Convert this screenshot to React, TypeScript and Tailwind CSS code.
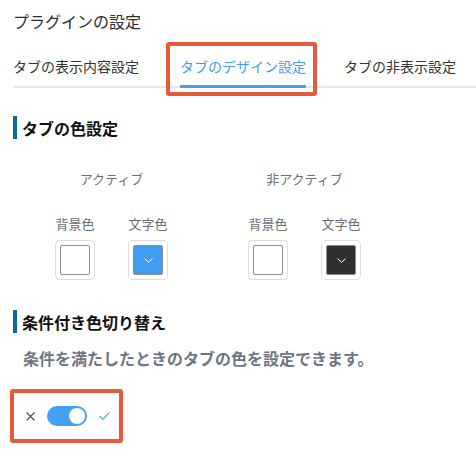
// プラグイン設定画面:タブのデザイン設定
import React, { useState } from "react";

const FONT = "'Noto Sans CJK JP', 'Noto Sans', sans-serif";

function Swatch({ color, chevron }: { color?: string; chevron?: boolean }) {
  return (
    <div className="w-[40px] h-[40px] border border-[#dcdce0] rounded-[5px] p-[4px] bg-white">
      <div
        className={`w-[30px] h-[30px] border border-[#8e8e93] rounded-[2px] flex items-center justify-center ${color ?? "bg-white"}`}
      >
        {chevron && (
          <svg width="9" height="5" viewBox="0 0 9 5" fill="none">
            <path d="M0.5 0.5 L4.5 4.3 L8.5 0.5" stroke="#ffffff" strokeWidth="1" />
          </svg>
        )}
      </div>
    </div>
  );
}

function ColorGroup({ title, textColor }: { title: string; textColor: string }) {
  return (
    <div className="flex flex-col items-center">
      <div className="text-[13px] leading-[20px] text-[#6f6f73]">{title}</div>
      <div className="flex gap-[33px] mt-[26px]">
        <div className="flex flex-col items-center">
          <div className="text-[13px] leading-[18px] text-[#6f6f73]">背景色</div>
          <div className="mt-[7px]">
            <Swatch />
          </div>
        </div>
        <div className="flex flex-col items-center">
          <div className="text-[13px] leading-[18px] text-[#6f6f73]">文字色</div>
          <div className="mt-[7px]">
            <Swatch color={textColor} chevron />
          </div>
        </div>
      </div>
    </div>
  );
}

function Heading({ children }: { children: React.ReactNode }) {
  return (
    <div className="flex items-center h-[23px] border-l-4 border-[#0b68a0] pl-[5px]">
      <h2 className="text-[16px] leading-[22px] font-bold text-[#111]">{children}</h2>
    </div>
  );
}

export default function App() {
  const [on, setOn] = useState(true);

  return (
    <div className="w-[476px] h-[468px] bg-white pl-[13px] pt-[10px] overflow-hidden" style={{ fontFamily: FONT }}>
      <h1 className="text-[16px] leading-[22px] text-[#2f2f33]">プラグインの設定</h1>

      {/* タブ */}
      <div className="flex mt-[24px] border-b-2 border-[#e6e8ec] text-[14px] leading-[20px]">
        <div className="pb-[10px] mr-[41px] text-[#333]">タブの表示内容設定</div>
        <div className="relative pb-[9px] mr-[38px] border-b-[3px] border-[#42a0f5] mb-[-2px] text-[#3f9df2]">
          タブのデザイン設定
          <div className="absolute -left-[14px] -right-[11px] -top-[14px] -bottom-[11px] border-4 border-[#e35b3b] rounded-[3px]" />
        </div>
        <div className="pb-[10px] text-[#333]">タブの非表示設定</div>
      </div>

      <div className="mt-[28px]">
        <Heading>タブの色設定</Heading>
      </div>

      <div className="flex gap-[80px] ml-[42px] mt-[30px]">
        <ColorGroup title="アクティブ" textColor="bg-[#3f9ef0]" />
        <ColorGroup title="非アクティブ" textColor="bg-[#303033]" />
      </div>

      <div className="mt-[30px]">
        <Heading>条件付き色切り替え</Heading>
      </div>
      <p className="mt-[14px] pl-[10px] text-[16px] leading-[22px] font-bold text-[#6e7683]">
        条件を満たしたときのタブの色を設定できます。
      </p>

      {/* 条件付き切り替えスイッチ */}
      <div className="mt-[20px] ml-[-3px] w-[113px] h-[54px] border-4 border-[#e35b3b] rounded-[3px] flex items-center pl-[12px] gap-[12px]">
        <svg width="9" height="9" viewBox="0 0 9 9" fill="none">
          <path d="M0.5 0.5 L8.5 8.5 M8.5 0.5 L0.5 8.5" stroke="#4a4a4a" strokeWidth="1.1" />
        </svg>
        <button
          type="button"
          onClick={() => setOn(!on)}
          className={`w-[40px] h-[20px] rounded-full p-[2px] flex items-center ${on ? "bg-[#42a0f5] justify-end" : "bg-[#c7c7cc] justify-start"}`}
        >
          <span className="w-[16px] h-[16px] rounded-full bg-white block" />
        </button>
        <svg width="11" height="8" viewBox="0 0 11 8" fill="none">
          <path d="M0.5 4 L3.8 7.2 L10.5 0.6" stroke="#42a0f5" strokeWidth="1.1" />
        </svg>
      </div>
    </div>
  );
}
